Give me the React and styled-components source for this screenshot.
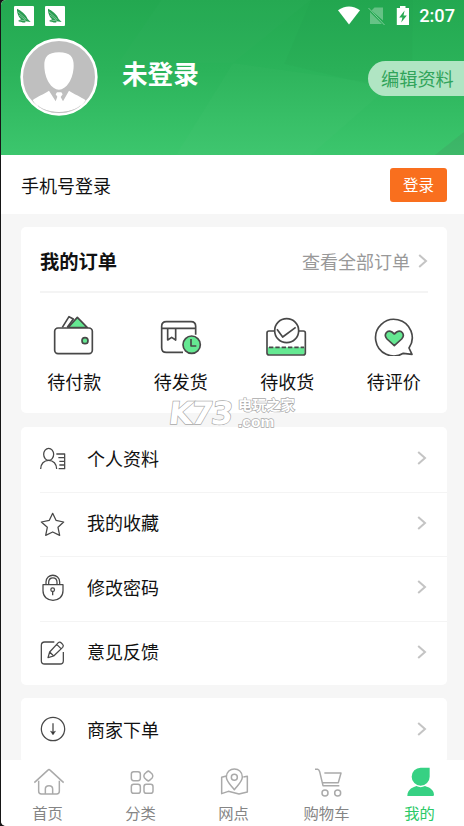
import styled, { createGlobalStyle } from "styled-components";

const orders = [
  { label: "待付款", Icon: WalletIcon },
  { label: "待发货", Icon: ParcelIcon },
  { label: "待收货", Icon: ReceiveIcon },
  { label: "待评价", Icon: ReviewIcon },
];

const settings = [
  { label: "个人资料", Icon: ProfileIcon },
  { label: "我的收藏", Icon: StarIcon },
  { label: "修改密码", Icon: LockIcon },
  { label: "意见反馈", Icon: EditIcon },
];

const tabs = [
  { label: "首页", Icon: HomeIcon },
  { label: "分类", Icon: CategoryIcon },
  { label: "网点", Icon: MapIcon },
  { label: "购物车", Icon: CartIcon },
  { label: "我的", Icon: MineIcon, active: true },
];

const MenuRow = ({ label, Icon }) => (
  <Row>
    <RowIcon viewBox="0 0 84 84">
      <Icon />
    </RowIcon>
    <RowLabel>{label}</RowLabel>
    <Chevron />
  </Row>
);

const App = () => {
  return (
    <>
      <GlobalStyle />
      <Screen>
        <Header>
          <HeaderPattern viewBox="0 0 463 155">
            <path d="M160 0L118 62L232 63L310 0Z" fill="#fff" opacity=".012" />
            <path d="M232 63L390 85L310 155H175Z" fill="#fff" opacity=".015" />
            <path d="M310 0L283 64L411 95L412 0Z" fill="#000" opacity=".01" />
            <path d="M434 155L463 132V155Z" fill="#555" opacity=".12" />
          </HeaderPattern>
          <StatusBar>
            <AppBadge />
            <AppBadge />
            <StatusIcons />
            <Clock>2:07</Clock>
          </StatusBar>
          <UserBar>
            <Avatar />
            <UserName>未登录</UserName>
            <EditButton>编辑资料</EditButton>
          </UserBar>
        </Header>

        <LoginBar>
          <span>手机号登录</span>
          <LoginButton>登录</LoginButton>
        </LoginBar>

        <Content>
          <OrderCard>
            <OrderHead>
              <OrderTitle>我的订单</OrderTitle>
              <OrderLink>查看全部订单</OrderLink>
              <Chevron />
            </OrderHead>
            <OrderGrid>
              {orders.map(({ label, Icon }) => (
                <OrderItem key={label}>
                  <OrderIcon viewBox="0 0 144 132">
                    <Icon />
                  </OrderIcon>
                  {label}
                </OrderItem>
              ))}
            </OrderGrid>
          </OrderCard>

          <Card>
            {settings.map((item) => (
              <MenuRow key={item.label} {...item} />
            ))}
          </Card>

          <Card>
            <MenuRow label="商家下单" Icon={DownIcon} />
          </Card>
        </Content>

        <TabBar>
          {tabs.map(({ label, Icon, active }) => (
            <Tab key={label} $active={active}>
              <TabIcon viewBox="0 0 108 96">
                <Icon />
              </TabIcon>
              {label}
            </Tab>
          ))}
        </TabBar>

        <Watermark>
          <WatermarkLogo>K73</WatermarkLogo>
          <WatermarkSite>
            <span>电玩之家</span>
            <b>.com</b>
          </WatermarkSite>
        </Watermark>
      </Screen>
    </>
  );
};
export default App;

function AppBadge() {
  return (
    <Badge viewBox="0 0 60 60">
      <rect width="60" height="60" rx="3" fill="#fff" />
      <path d="M9 8C19 12 37 26 41 39L50 48L35 46L25 49L14 43L22 40C14 34 8 19 9 8Z" fill="#279b50" />
      <path d="M14 44L35 43M17 49H34M11 17L37 40M15 27L34 42" stroke="#c8ecd5" strokeWidth="1.5" />
      <path d="M14 46C19 41 24 51 34 46" stroke="#279b50" strokeWidth="4" fill="none" />
    </Badge>
  );
}

function StatusIcons() {
  return (
    <StatusGlyphs viewBox="0 0 74 22">
      <path d="M0 5.2C6.5.1 15.5.1 22 5.2L11 19.5Z" fill="#fff" />
      <path d="M36.5 2.5H45V15.5L33.5 5.5ZM32 7V19H44Z" fill="#fff" opacity=".3" />
      <path d="M30.5 3L46.5 20" stroke="#fff" strokeWidth="1" opacity=".4" />
      <path d="M58.8 3H62V1H67.5V3H71V20H58.8Z" fill="#fff" />
      <path d="M66.6 5.5L61.2 12.4H64.4L63.2 17.5L68.8 10.4H65.5Z" fill="#29a954" />
    </StatusGlyphs>
  );
}

function Avatar() {
  return (
    <AvatarSvg viewBox="0 0 234 234">
      <circle cx="117" cy="117" r="112" fill="#bfbfbf" stroke="#fff" strokeWidth="8" />
      <path d="M117 43C151 43 162 58 161 84C160 124 139 155 117 155C95 155 74 124 73 84C72 58 83 43 117 43Z" fill="#fff" />
      <path d="M38 187C49 176 72 169 87 158L107 190L112 176L107 169L111 163H124L128 169L122 177L129 190L147 158C162 169 184 176 197 187C170 234 64 234 38 187Z" fill="#fff" />
      <path d="M54 203C85 231 150 231 181 203" fill="none" stroke="#bfbfbf" strokeWidth="1.5" />
    </AvatarSvg>
  );
}

function Chevron() {
  return (
    <ChevronSvg viewBox="0 0 10 14">
      <path d="M1.2 1L8 7L1.2 13" />
    </ChevronSvg>
  );
}

function WalletIcon() {
  return (
    <>
      <path d="M37 46L57 14L70 21L52 46" />
      <path d="M54 47L82 16L112 47Z" fill="#65e892" />
      <rect x="14" y="48" width="113" height="77" rx="10" fill="#fff" />
      <circle cx="105" cy="86" r="9" fill="#65e892" />
    </>
  );
}

function ParcelIcon() {
  return (
    <>
      <path d="M116 68V43Q116 29 102 29H28Q14 29 14 43V107Q14 121 28 121H78M14 49H116" />
      <path d="M32 49V84L44 76L56 84V49" />
      <circle cx="104" cy="98" r="26" fill="#65e892" />
      <path d="M102 81V102H118" />
    </>
  );
}

function ReceiveIcon() {
  return (
    <>
      <path d="M14 106H125V124Q125 128 121 128H18Q14 128 14 124Z" fill="#65e892" stroke="none" />
      <rect x="12" y="57" width="115" height="72" rx="6" />
      <path d="M18 106H123" strokeDasharray="13 6" />
      <circle cx="71" cy="56" r="36" fill="#fff" />
      <path d="M42 52L59 75L98 46" />
    </>
  );
}

function ReviewIcon() {
  return (
    <>
      <path d="M117 108A55 55 0 1 0 100 124L126 127Z" />
      <path d="M73 101L51 81C39 67 52 52 66 60L73 66L80 60C94 52 107 67 95 81Z" fill="#65e892" />
    </>
  );
}

function ProfileIcon() {
  return (
    <>
      <ellipse cx="29" cy="31" rx="15" ry="18" />
      <path d="M5 75C5 60 15 49 29 49S53 60 53 75M52 30H77V74H59M58 41H75M61 52H75M61 63H75" />
    </>
  );
}

function StarIcon() {
  return <path d="M41 13L51 34L74 39L57 55L62 79L41 69L20 79L25 55L7 39L31 34Z" />;
}

function LockIcon() {
  return (
    <>
      <path d="M12 35H72V53C72 71 59 82 42 82S12 71 12 53Z" />
      <path d="M21 35V27C21 0 62 0 62 27V35M29 35V28C29 10 54 10 54 28V35" />
      <circle cx="41" cy="50" r="5.5" />
      <path d="M41 56V67" strokeWidth="4" />
    </>
  );
}

function EditIcon() {
  return (
    <>
      <path d="M46 12H17Q7 12 7 22V68Q7 78 17 78H63Q73 78 73 68V42" />
      <path d="M27 59L32 42L58 14Q62 10 67 15L71 19Q75 23 71 28L44 54ZM53 19L66 32M32 42L44 54" />
    </>
  );
}

function DownIcon() {
  return (
    <>
      <circle cx="42" cy="42" r="35" />
      <path d="M42 25V54" />
      <path d="M34 48L42 51L50 48L42 60Z" fill="#333" strokeWidth="1" />
    </>
  );
}

function HomeIcon() {
  return (
    <path d="M13 47L53 10Q57 6 61 10L101 47M26 41V73Q26 81 34 81H80Q88 81 88 73V41M46 81V66Q46 56 57 56T68 66V81" />
  );
}

function CategoryIcon() {
  return (
    <>
      <rect x="25" y="14" width="27" height="27" rx="7" />
      <rect x="25" y="52" width="27" height="27" rx="7" />
      <rect x="63" y="52" width="27" height="27" rx="7" />
      <path d="M71 15L76 12L81 15L88 22Q91 27 88 32L81 39L76 42L71 39L64 32Q61 27 64 22Z" />
    </>
  );
}

function MapIcon() {
  return (
    <>
      <path d="M31 27L17 31V80L37 73L69 81L94 75V28L82 30" />
      <path d="M55 68C43 53 31 43 31 30C31 -2 79 -2 79 30C79 43 67 53 55 68Z" />
      <circle cx="55" cy="31" r="9" />
    </>
  );
}

function CartIcon() {
  return (
    <>
      <path d="M18 7H26Q30 8 32 14L42 56H91M46 18H96L88 47H41" />
      <circle cx="48" cy="78" r="9" />
      <circle cx="86" cy="78" r="9" />
    </>
  );
}

function MineIcon() {
  return (
    <path
      d="M83 2V29A27 27 0 1 1 56 2ZM16 87C16 65 36 60 43 57Q56 64 69 57C77 60 96 65 96 84Q96 87 92 87Z"
      fill="#36d183"
      stroke="none"
    />
  );
}

const GlobalStyle = createGlobalStyle`
  * {
    box-sizing: border-box;
  }

  body {
    margin: 0;
    background: #161616;
    font-family: "Noto Sans CJK SC", sans-serif;
  }

  svg {
    display: block;
    flex-shrink: 0;
  }
`;

const Screen = styled.div`
  position: relative;
  display: flex;
  flex-direction: column;
  height: 826px;
  margin-left: 1px;
  border-radius: 5px 0 0 5px;
  overflow: hidden;
  background: #f6f6f6;
  color: #111;
  font-size: 18px;
`;

const Header = styled.header`
  position: relative;
  flex: 0 0 155px;
  background: linear-gradient(#23a850, #2bb35a 45%, #3cc66d);
`;

const HeaderPattern = styled.svg`
  position: absolute;
  inset: 0;
  width: 100%;
  height: 100%;
`;

const StatusBar = styled.div`
  position: relative;
  display: flex;
  align-items: center;
  gap: 11px;
  height: 32px;
  padding: 0 9px 0 13px;
`;

const Badge = styled.svg`
  width: 20px;
  height: 20px;
`;

const StatusGlyphs = styled.svg`
  width: 74px;
  height: 22px;
  margin-left: auto;
`;

const Clock = styled.span`
  margin-left: -4px;
  color: #fff;
  font: 500 18.2px/34px Roboto, sans-serif;
`;

const UserBar = styled.div`
  position: relative;
  display: flex;
  align-items: flex-start;
  padding: 6px 0 0 19px;
`;

const AvatarSvg = styled.svg`
  width: 78px;
  height: 78px;
`;

const UserName = styled.span`
  margin: 17px 0 0 24px;
  color: #fff;
  font-size: 25.6px;
  line-height: 36px;
  font-weight: 700;
`;

const EditButton = styled.button`
  width: 96px;
  height: 35px;
  margin: 23px 0 0 auto;
  padding: 0 0 0 13px;
  border: 0;
  border-radius: 18px 0 0 18px;
  background: #b0e5c3;
  color: #31a45b;
  font: inherit;
  font-size: 18.2px;
  line-height: 35px;
  text-align: left;
  white-space: nowrap;
`;

const LoginBar = styled.div`
  display: flex;
  flex: 0 0 59px;
  align-items: center;
  justify-content: space-between;
  padding: 0 17px 0 20px;
  background: #fff;
`;

const LoginButton = styled.button`
  width: 57px;
  height: 34px;
  padding: 0 0 2px;
  border: 0;
  border-radius: 3px;
  background: #f96f1e;
  color: #fff;
  font: inherit;
  font-size: 15.5px;
`;

const Content = styled.main`
  display: flex;
  flex: 1;
  flex-direction: column;
  gap: 13px;
  min-height: 0;
  padding: 13px 17px 0 20px;
  overflow: hidden;
`;

const Card = styled.section`
  flex-shrink: 0;
  border-radius: 5px;
  background: #fff;
`;

const OrderCard = styled(Card)`
  height: 186px;
  margin-bottom: 1px;
`;

const OrderHead = styled.div`
  display: flex;
  align-items: center;
  height: 66px;
  margin: 0 19px;
  padding-top: 3px;
  border-bottom: 2px solid #f4f4f4;
`;

const OrderTitle = styled.h2`
  margin: 0;
  font-size: 19.3px;
  font-weight: 700;
`;

const OrderLink = styled.span`
  margin: 0 8px 0 auto;
  color: #999;
`;

const OrderGrid = styled.div`
  display: grid;
  grid-template-columns: repeat(4, 1fr);
  padding-top: 19px;
`;

const OrderItem = styled.div`
  display: flex;
  flex-direction: column;
  align-items: center;
  line-height: 50px;
`;

const OrderIcon = styled.svg`
  width: 48px;
  height: 44px;
  fill: none;
  stroke: #484848;
  stroke-width: 5px;
  stroke-linejoin: round;
`;

const Row = styled.div`
  display: flex;
  align-items: center;
  height: 64.5px;
  padding: 0 20px 2px 0;
  margin-left: 19px;

  & + & {
    padding-bottom: 3px;
    border-top: 1.5px solid #f4f4f4;
  }
`;

const RowIcon = styled.svg`
  width: 28px;
  height: 28px;
  margin-left: -1px;
  fill: none;
  stroke: #484848;
  stroke-width: 3.8px;
  stroke-linejoin: round;
`;

const RowLabel = styled.span`
  margin: -1px auto 0 20px;
  line-height: 26px;
`;

const ChevronSvg = styled.svg`
  width: 10px;
  height: 14px;
  fill: none;
  stroke: #c4c4c4;
  stroke-width: 2px;
`;

const TabBar = styled.nav`
  display: grid;
  flex: 0 0 65px;
  grid-template-columns: repeat(5, 93px);
  background: #fff;
`;

const Tab = styled.div`
  display: flex;
  flex-direction: column;
  align-items: center;
  padding-top: 7px;
  color: ${(props) => (props.$active ? "#2ac967" : "#858585")};
  font-size: 15.3px;
  line-height: 27px;
`;

const TabIcon = styled.svg`
  width: 36px;
  height: 32px;
  fill: none;
  stroke: #aaa;
  stroke-width: 4.5px;
  stroke-linejoin: round;
`;

const Watermark = styled.div`
  position: absolute;
  top: 398px;
  left: 168px;
  display: flex;
  color: #fff;
  -webkit-text-stroke: 1.4px #aaa;
  paint-order: stroke fill;
`;

const WatermarkLogo = styled.span`
  width: 69px;
  height: 30px;
  font: 700 31px/30px "DejaVu Sans", sans-serif;
  letter-spacing: -1.5px;
  transform: skewX(-7deg);
`;

const WatermarkSite = styled.span`
  display: flex;
  flex-direction: column;
  font: 700 14.2px/16px "Liberation Sans", "Noto Sans CJK SC", sans-serif;

  span {
    height: 15px;
    line-height: 15px;
  }

  b {
    height: 15px;
    font-size: 15.5px;
    line-height: 17px;
  }
`;
